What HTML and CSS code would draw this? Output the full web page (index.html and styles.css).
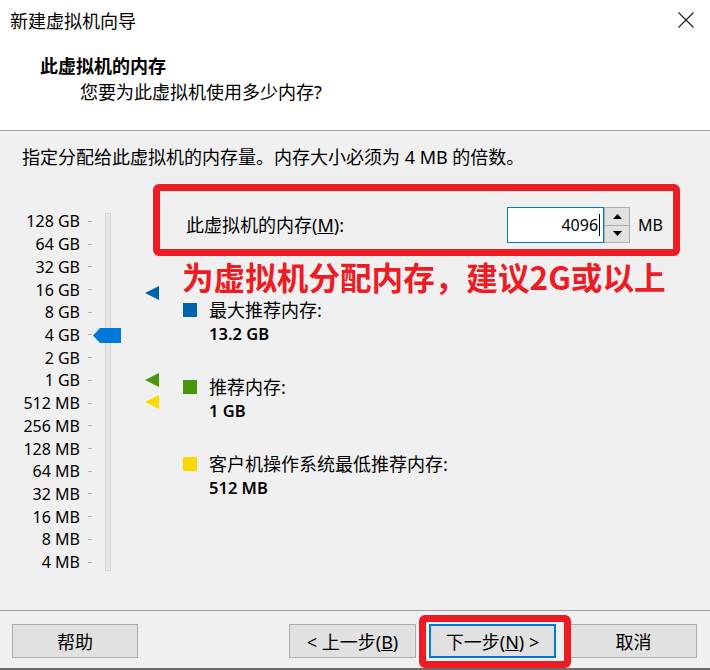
FILE: index.html
```html
<!DOCTYPE html>
<html lang="zh-CN">
<head>
    <meta charset="UTF-8">
    <title>新建虚拟机向导</title>
    <link rel="stylesheet" href="styles.css">
</head>
<body>
    <div class="window">
        <div class="titlebar">
            <span class="title">新建虚拟机向导</span>
            <svg class="close" width="16" height="16" viewBox="0 0 16 16">
                <path d="M0.5 0.5L15.5 15.5M15.5 0.5L0.5 15.5" stroke="#1a1a1a" stroke-width="1.1" fill="none"/>
            </svg>
        </div>

        <div class="header">
            <h1>此虚拟机的内存</h1>
            <p>您要为此虚拟机使用多少内存?</p>
        </div>

        <div class="content">
            <p class="intro">指定分配给此虚拟机的内存量。内存大小必须为 4 MB 的倍数。</p>

            <div class="main">
                <div class="slider">
                    <div class="labels">
                        <div class="row"><span>128 GB</span><i class="tick"></i></div>
                        <div class="row"><span>64 GB</span><i class="tick"></i></div>
                        <div class="row"><span>32 GB</span><i class="tick"></i></div>
                        <div class="row"><span>16 GB</span><i class="tick"></i></div>
                        <div class="row"><span>8 GB</span><i class="tick"></i></div>
                        <div class="row"><span>4 GB</span><i class="tick"></i></div>
                        <div class="row"><span>2 GB</span><i class="tick"></i></div>
                        <div class="row"><span>1 GB</span><i class="tick"></i></div>
                        <div class="row"><span>512 MB</span><i class="tick"></i></div>
                        <div class="row"><span>256 MB</span><i class="tick"></i></div>
                        <div class="row"><span>128 MB</span><i class="tick"></i></div>
                        <div class="row"><span>64 MB</span><i class="tick"></i></div>
                        <div class="row"><span>32 MB</span><i class="tick"></i></div>
                        <div class="row"><span>16 MB</span><i class="tick"></i></div>
                        <div class="row"><span>8 MB</span><i class="tick"></i></div>
                        <div class="row"><span>4 MB</span><i class="tick"></i></div>
                    </div>
                    <div class="track"></div>

                    <!-- thumb sits on 4 GB -->
                    <svg class="thumb" width="28" height="15" viewBox="0 0 28 15">
                        <polygon points="0,7.5 7,0 28,0 28,15 7,15" fill="#0078d7"/>
                    </svg>

                    <!-- markers: max recommended, recommended, guest minimum -->
                    <svg class="marker" style="top: 76px" width="14" height="14" viewBox="0 0 14 14">
                        <polygon points="0,7 14,0 14,14" fill="#0063b1"/>
                    </svg>
                    <svg class="marker" style="top: 163px" width="14" height="14" viewBox="0 0 14 14">
                        <polygon points="0,7 14,0 14,14" fill="#4a960c"/>
                    </svg>
                    <svg class="marker" style="top: 185px" width="14" height="14" viewBox="0 0 14 14">
                        <polygon points="0,7 14,0 14,14" fill="#fcd700"/>
                    </svg>
                </div>

                <div class="panel">
                    <div class="mem-row">
                        <label class="mem-label">此虚拟机的内存(<u>M</u>):</label>
                        <div class="spin">
                            <div class="spin-input">4096<span class="caret"></span></div>
                            <div class="spin-btns">
                                <div class="spin-btn">
                                    <svg width="9" height="5" viewBox="0 0 9 5"><polygon points="0,5 4.5,0 9,5" fill="#000"/></svg>
                                </div>
                                <div class="spin-btn">
                                    <svg width="9" height="5" viewBox="0 0 9 5"><polygon points="0,0 9,0 4.5,5" fill="#000"/></svg>
                                </div>
                            </div>
                        </div>
                        <span class="unit">MB</span>
                    </div>

                    <div class="note">为虚拟机分配内存，建议2G或以上</div>

                    <div class="legend">
                        <div class="item">
                            <span class="swatch blue"></span>
                            <div>
                                <div class="name">最大推荐内存:</div>
                                <div class="value">13.2 GB</div>
                            </div>
                        </div>
                        <div class="item">
                            <span class="swatch green"></span>
                            <div>
                                <div class="name">推荐内存:</div>
                                <div class="value">1 GB</div>
                            </div>
                        </div>
                        <div class="item">
                            <span class="swatch yellow"></span>
                            <div>
                                <div class="name">客户机操作系统最低推荐内存:</div>
                                <div class="value">512 MB</div>
                            </div>
                        </div>
                    </div>
                </div>
            </div>
        </div>

        <div class="footer">
            <button class="btn">帮助</button>
            <button class="btn back">&lt; 上一步(<u>B</u>)</button>
            <button class="btn next">下一步(<u>N</u>) &gt;</button>
            <button class="btn cancel">取消</button>
            <div class="annot-next"></div>
        </div>
    </div>
</body>
</html>
```

FILE: styles.css
```css
:root {
    --dialog-bg: #f0f0f0;
    --line: #a0a0a0;
    --accent: #0078d7;
    --annot-red: #ed1c24;
}

* {
    box-sizing: border-box;
}

body {
    margin: 0;
    font-family: "Noto Sans", "Noto Sans CJK SC", sans-serif;
    font-size: 18px;
    color: #000;
    background: var(--dialog-bg);
}

.window {
    width: 710px;
    height: 670px;
    display: flex;
    flex-direction: column;
    background: var(--dialog-bg);
}

/* title bar + header */
.titlebar {
    height: 40px;
    display: flex;
    align-items: center;
    justify-content: space-between;
    padding: 0 16px 0 10px;
    background: #fff;
}

.title {
    font-family: "Noto Sans CJK SC", sans-serif;
    font-size: 18px;
    line-height: 24px;
}

.header {
    height: 91px;
    padding: 12px 0 0 40px;
    background: #fff;
    border-bottom: 1px solid var(--line);
}

.header h1 {
    margin: 0;
    font-family: "Noto Sans CJK SC", sans-serif;
    font-size: 18px;
    font-weight: bold;
    line-height: 26px;
}

.header p {
    margin: 1px 0 0 40px;
    line-height: 26px;
}

/* body */
.content {
    flex: 1;
}

.intro {
    margin: 0;
    padding: 13px 0 0 22px;
    line-height: 26px;
}

.main {
    display: flex;
    margin-top: 14px;
}

.slider {
    position: relative;
    width: 153px;
    padding-top: 26px;
    display: flex;
    align-items: flex-start;
}

.labels {
    width: 92px;
    display: flex;
    flex-direction: column;
}

.row {
    height: 22.73px;
    display: flex;
    align-items: center;
    justify-content: flex-end;
    font-size: 16px;
}

.tick {
    width: 4px;
    height: 1px;
    margin-left: 8px;
    background: #b4b4b4;
}

.track {
    width: 6px;
    height: 358px;
    margin: 3px 0 0 13px;
    background: #e7e7e7;
    border: 1px solid #d6d6d6;
}

.thumb {
    position: absolute;
    left: 93px;
    top: 144px;
}

.marker {
    position: absolute;
    left: 145px;
    margin-top: 26px;
}

/* right panel */
.panel {
    width: 527px;
}

.mem-row {
    height: 72px;
    display: flex;
    align-items: center;
    padding: 16px 10px 6px 26px;
    border: 7px solid var(--annot-red);
    border-radius: 6px;
}

.mem-label {
    flex: 1;
    line-height: 24px;
}

.spin {
    display: flex;
}

.spin-input {
    width: 97px;
    height: 36px;
    display: flex;
    align-items: center;
    justify-content: flex-end;
    padding-right: 3px;
    background: #fff;
    border: 1px solid var(--accent);
    font-size: 16px;
}

.caret {
    width: 1px;
    height: 22px;
    margin-left: 1px;
    background: #000;
}

.spin-btns {
    width: 26px;
    height: 36px;
    display: flex;
    flex-direction: column;
    border: 1px solid #adadad;
    background: #e1e1e1;
}

.spin-btn {
    flex: 1;
    display: flex;
    align-items: center;
    justify-content: center;
}

.spin-btn + .spin-btn {
    border-top: 1px solid #adadad;
}

.unit {
    margin-left: 8px;
    font-size: 16px;
}

.note {
    padding-left: 29px;
    font-family: "Noto Sans CJK SC", sans-serif;
    font-size: 31.6px;
    font-weight: bold;
    line-height: 40px;
    color: var(--annot-red);
    white-space: nowrap;
}

.legend {
    margin-top: 2px;
    padding-left: 30px;
    display: flex;
    flex-direction: column;
    gap: 29px;
}

.item {
    display: flex;
    gap: 12px;
}

.swatch {
    width: 14px;
    height: 14px;
    margin-top: 5px;
}

.swatch.blue { background: #0063b1; }
.swatch.green { background: #4a960c; }
.swatch.yellow { background: #fcd700; }

.name {
    line-height: 24px;
}

.value {
    line-height: 24px;
    font-size: 16.5px;
    font-weight: 600;
}

/* footer buttons */
.footer {
    position: relative;
    height: 60px;
    display: flex;
    padding: 13px 13px 0 12px;
    border-top: 1px solid var(--line);
    border-bottom: 2px solid #6b6b6b;
}

.btn {
    width: 126px;
    height: 34px;
    padding: 0;
    font-family: "Noto Sans", "Noto Sans CJK SC", sans-serif;
    font-size: 18px;
    color: #000;
    background: #e1e1e1;
    border: 1px solid #adadad;
}

.btn.back {
    margin-left: auto;
    width: 127px;
}

.btn.next {
    width: 127px;
    margin-left: 13px;
    border: 2px solid var(--accent);
}

.btn.cancel {
    width: 127px;
    margin-left: 14px;
}

.annot-next {
    position: absolute;
    left: 419px;
    top: 4px;
    width: 152px;
    height: 53px;
    border: 7px solid var(--annot-red);
    border-radius: 6px;
}
```
